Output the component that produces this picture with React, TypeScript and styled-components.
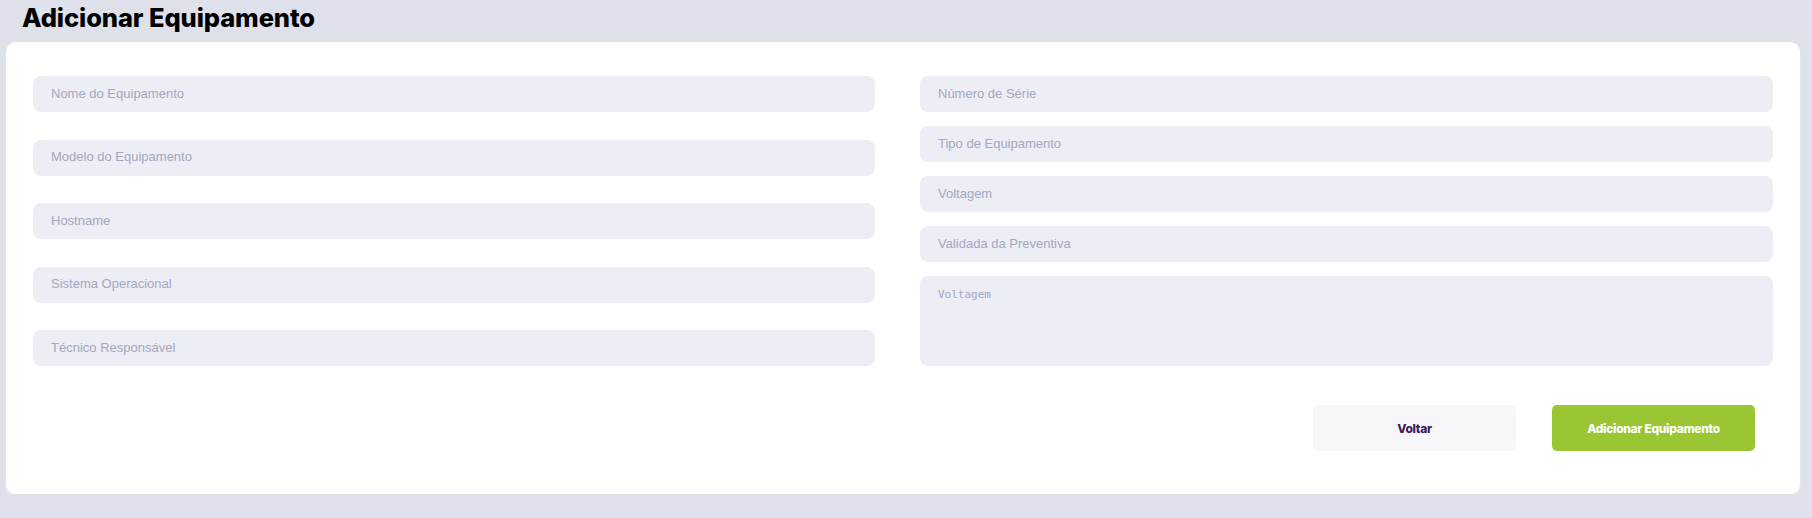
import React from "react";
import styled, { createGlobalStyle } from "styled-components";

const GlobalStyle = createGlobalStyle`
  html, body {
    margin: 0;
    padding: 0;
    background: #dfe1ea;
    font-family: "Liberation Sans", Arial, sans-serif;
  }
  * { box-sizing: border-box; }
`;

const Page = styled.div`
  padding: 0 12px 0 6px;
  width: 1812px;
`;

const Title = styled.h1`
  margin: 0;
  height: 42px;
  padding: 3px 0 0 16px;
  font-family: "Inter", "Lato", sans-serif;
  font-weight: 800;
  font-size: 25.5px;
  line-height: 30px;
  letter-spacing: -0.1px;
  color: #000;
`;

const Card = styled.div`
  background: #ffffff;
  border-radius: 10px;
  padding: 34px 27px 43px;
  box-shadow: 0 5px 3px rgba(236, 236, 240, 0.9);
`;

const FormGrid = styled.div`
  display: grid;
  grid-template-columns: 842px 853px;
  column-gap: 45px;
`;

const LeftColumn = styled.div`
  display: flex;
  flex-direction: column;
  justify-content: space-between;
`;

const RightColumn = styled.div`
  display: flex;
  flex-direction: column;
  gap: 14px;
`;

const Input = styled.input`
  display: block;
  width: 100%;
  height: 36px;
  border: none;
  outline: none;
  border-radius: 8px;
  background: #ecedf5;
  padding: 0 18px 2px;
  font-family: "Liberation Sans", Arial, sans-serif;
  font-size: 13px;
  color: #333;
  &::placeholder {
    color: #a4a7c1;
  }
`;

const TextArea = styled.textarea`
  display: block;
  width: 100%;
  height: 90px;
  border: none;
  outline: none;
  resize: none;
  border-radius: 8px;
  background: #ecedf5;
  padding: 12px 18px;
  font-family: "DejaVu Sans Mono", "Liberation Mono", monospace;
  font-size: 11px;
  color: #333;
  &::placeholder {
    color: #a4a7c1;
  }
`;

const Actions = styled.div`
  display: flex;
  justify-content: flex-end;
  gap: 36px;
  margin-top: 39px;
  padding-right: 18px;
`;

const Button = styled.button<{ $primary?: boolean }>`
  width: 203px;
  height: 46px;
  border: none;
  border-radius: 5px;
  cursor: pointer;
  font-family: "Inter", "Lato", sans-serif;
  font-weight: 800;
  font-size: 12px;
  letter-spacing: -0.3px;
  background: ${(p) => (p.$primary ? "#9ac633" : "#f7f7f9")};
  color: ${(p) => (p.$primary ? "#ffffff" : "#3e1a56")};
`;

export default function App() {
  return (
    <>
      <GlobalStyle />
      <Page>
        <Title>Adicionar Equipamento</Title>
        <Card>
          <FormGrid>
            <LeftColumn>
              <Input placeholder="Nome do Equipamento" />
              <Input placeholder="Modelo do Equipamento" />
              <Input placeholder="Hostname" />
              <Input placeholder="Sistema Operacional" />
              <Input placeholder="Técnico Responsável" />
            </LeftColumn>
            <RightColumn>
              <Input placeholder="Número de Série" />
              <Input placeholder="Tipo de Equipamento" />
              <Input placeholder="Voltagem" />
              <Input placeholder="Validada da Preventiva" />
              <TextArea placeholder="Voltagem" />
            </RightColumn>
          </FormGrid>
          <Actions>
            <Button type="button">Voltar</Button>
            <Button type="button" $primary>
              Adicionar Equipamento
            </Button>
          </Actions>
        </Card>
      </Page>
    </>
  );
}
